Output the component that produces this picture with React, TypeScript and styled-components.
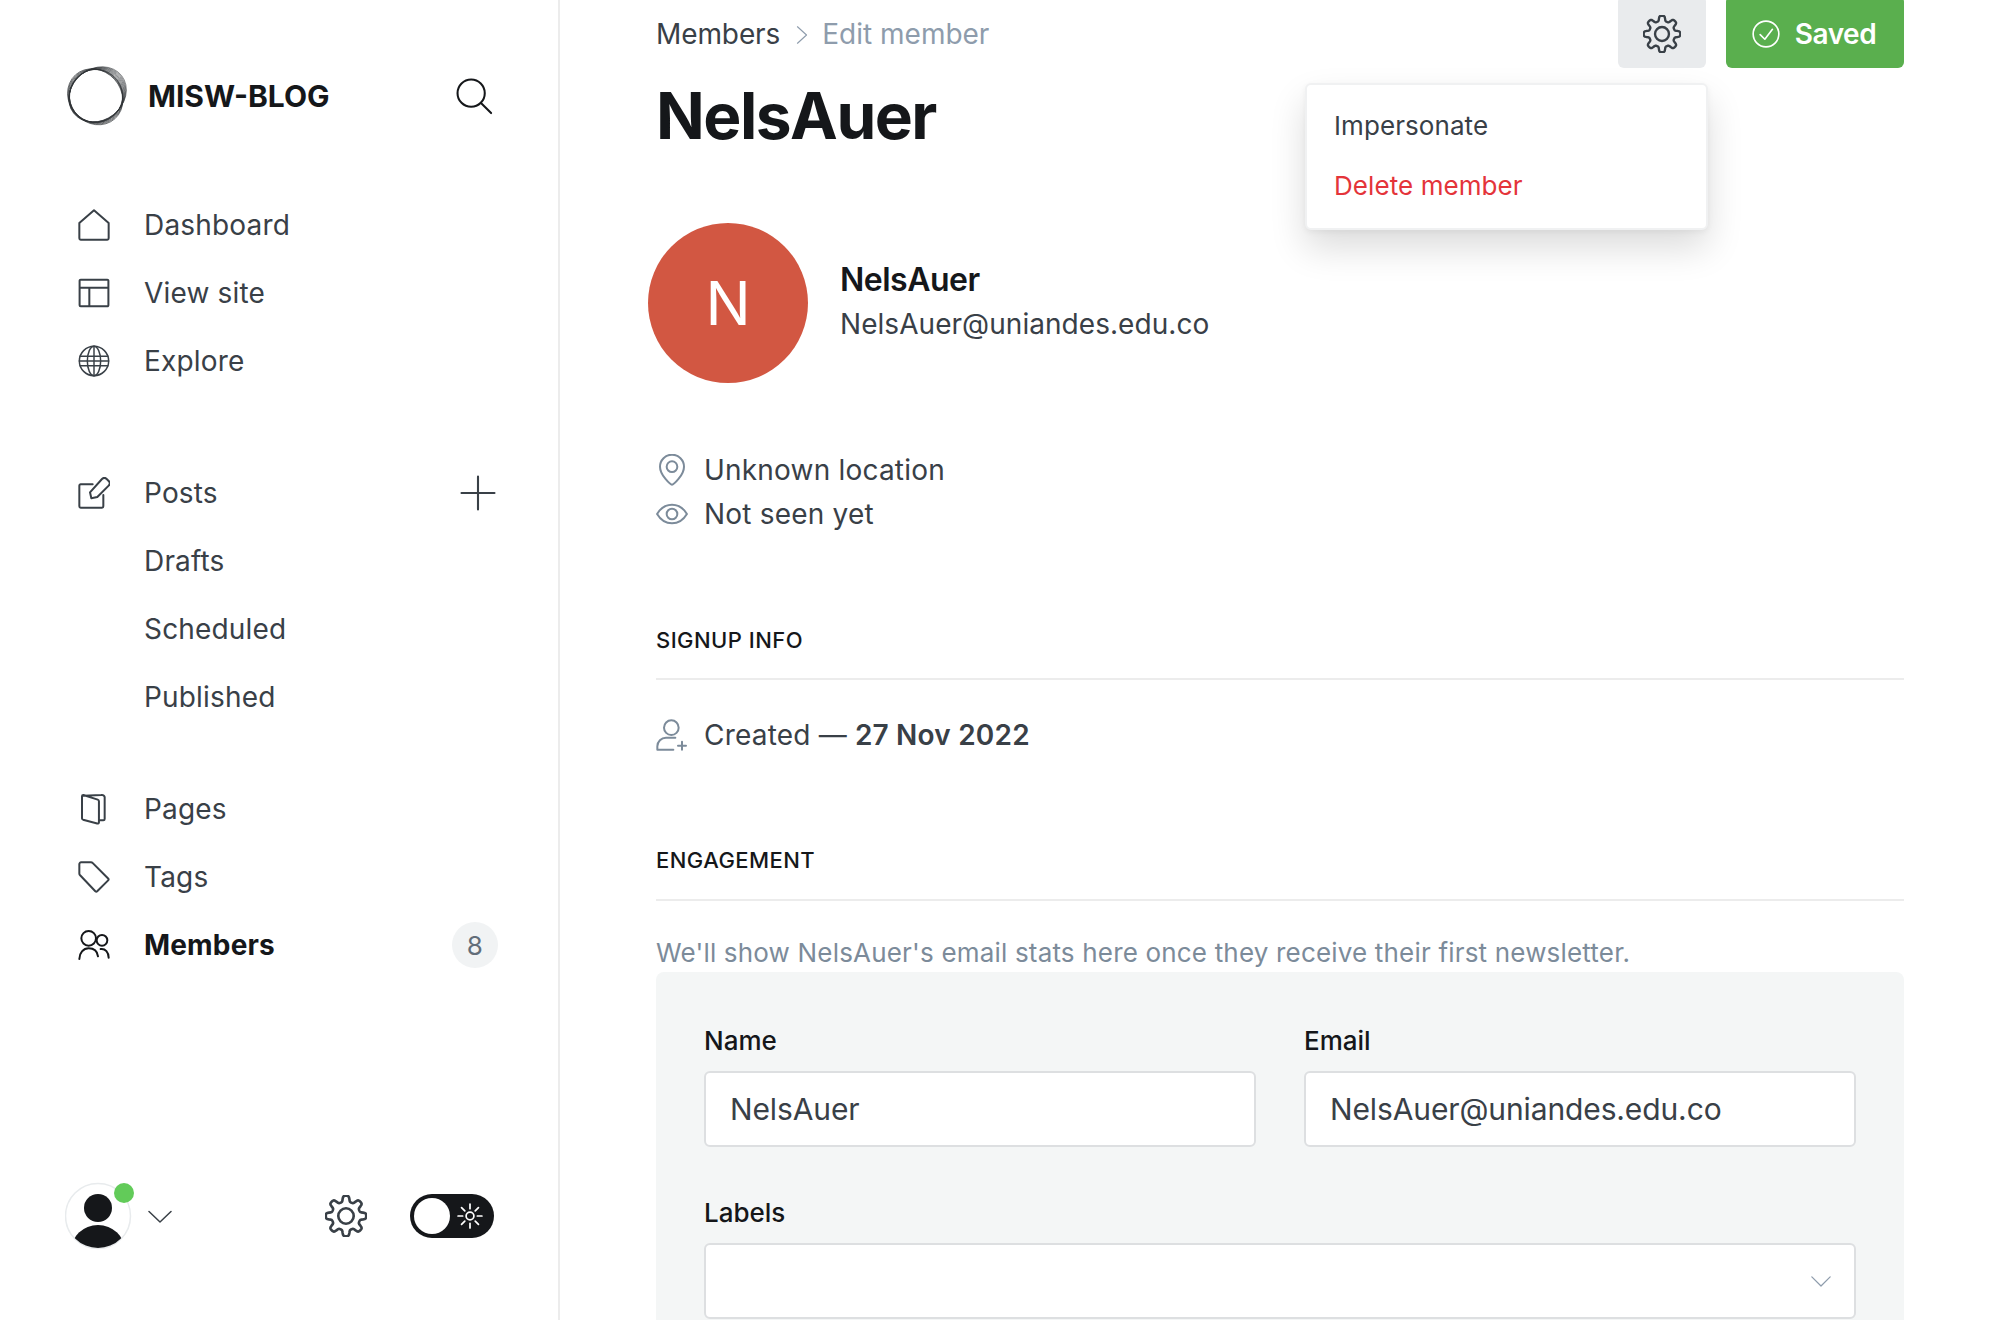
import * as React from 'react';
import styled, { createGlobalStyle } from 'styled-components';

const GlobalStyle = createGlobalStyle`
  html, body {
    margin: 0;
    padding: 0;
    background: #fff;
    font-family: Inter, "Noto Sans", sans-serif;
    color: #394047;
  }
  * { box-sizing: border-box; }
`;

const Page = styled.div`
  display: flex;
  width: 2000px;
  height: 1320px;
  overflow: hidden;
`;

const Sidebar = styled.aside`
  flex: 0 0 560px;
  height: 100%;
  border-right: 2px solid #ececec;
  padding: 65px 64px 0 65px;
  display: flex;
  flex-direction: column;
`;

const Brand = styled.div`
  display: flex;
  align-items: center;
  height: 62px;
`;

const BrandName = styled.div`
  margin-left: 21px;
  font-size: 30px;
  font-weight: 700;
  color: #15171a;
  flex: 1;
  letter-spacing: 0;
`;

const SearchSlot = styled.span`
  margin-right: 1px;
`;

const NavGroup = styled.nav<{ $top: number }>`
  display: flex;
  flex-direction: column;
  margin-top: ${(p) => p.$top}px;
`;

const NavRow = styled.div<{ $active?: boolean }>`
  display: flex;
  align-items: center;
  height: 68px;
  padding-left: 13px;
  font-size: 28px;
  letter-spacing: 0.17px;
  font-weight: ${(p) => (p.$active ? 700 : 400)};
  color: ${(p) => (p.$active ? '#15171a' : '#394047')};
`;

const NavIcon = styled.span`
  display: flex;
  width: 32px;
  height: 32px;
  margin-right: 34px;
`;

const NavLabel = styled.span`
  flex: 1;
`;

const NavSubLabel = styled.span`
  margin-left: 66px;
`;

const PlusSlot = styled.span`
  display: flex;
  margin-right: -2px;
`;

const Count = styled.span`
  width: 46px;
  height: 46px;
  margin-right: -4px;
  border-radius: 50%;
  background: #f1f3f4;
  color: #626d79;
  font-size: 26px;
  font-weight: 400;
  display: flex;
  align-items: center;
  justify-content: center;
`;

const Footer = styled.div`
  margin-top: auto;
  margin-bottom: 70px;
  display: flex;
  align-items: center;
  height: 68px;
`;

const UserWrap = styled.div`
  position: relative;
  width: 68px;
  height: 68px;
`;

const OnlineDot = styled.span`
  position: absolute;
  top: 1px;
  right: -1px;
  width: 20px;
  height: 20px;
  border-radius: 50%;
  background: #62cb59;
`;

const FooterChevron = styled.span`
  display: flex;
  margin-left: 15px;
  flex: 1;
`;

const Toggle = styled.div`
  width: 84px;
  height: 44px;
  margin-left: 43px;
  border-radius: 22px;
  background: #15171a;
  display: flex;
  align-items: center;
  padding: 0 11px 0 4px;
  justify-content: space-between;
`;

const Knob = styled.span`
  width: 36px;
  height: 36px;
  border-radius: 50%;
  background: #fff;
`;

const Main = styled.main`
  flex: 1;
  padding: 0 96px;
  min-width: 0;
  position: relative;
`;

const TopBar = styled.div`
  display: flex;
  align-items: center;
  height: 68px;
`;

const Crumbs = styled.div`
  flex: 1;
  display: flex;
  align-items: center;
  font-size: 28px;
  letter-spacing: -0.1px;
`;

const CrumbSep = styled.span`
  display: flex;
  margin: 2px 11px 0 13px;
`;

const CrumbCurrent = styled.span`
  color: #8e9cac;
  letter-spacing: 0;
`;

const GearButton = styled.button`
  width: 88px;
  height: 72px;
  margin: -4px 20px 0 0;
  border: 0;
  border-radius: 6px;
  background: #e9ebed;
  display: flex;
  align-items: center;
  justify-content: center;
  padding: 4px 0 0;
`;

const SavedButton = styled.button`
  width: 178px;
  height: 72px;
  margin-top: -4px;
  border: 0;
  border-radius: 6px;
  background: #5aaf4e;
  color: #fff;
  font-family: inherit;
  font-size: 28px;
  font-weight: 600;
  letter-spacing: -0.45px;
  display: flex;
  align-items: center;
  justify-content: center;
  gap: 15px;
  padding: 4px 2px 0 0;
`;

const Menu = styled.div`
  position: absolute;
  top: 83px;
  left: 745px;
  width: 403px;
  height: 147px;
  background: #fff;
  border: 2px solid #f0f1f2;
  border-radius: 6px;
  box-shadow: 0 18px 36px rgba(0, 0, 0, 0.14), 0 2px 6px rgba(0, 0, 0, 0.05);
  padding: 10px 0 0 27px;
`;

const MenuItem = styled.div<{ $danger?: boolean }>`
  height: 60px;
  display: flex;
  align-items: center;
  font-size: 26px;
  letter-spacing: 0.08px;
  color: ${(p) => (p.$danger ? '#e4343a' : '#394047')};
`;

const Title = styled.h1`
  margin: 10px 0 0;
  font-size: 64px;
  line-height: 76px;
  font-weight: 700;
  letter-spacing: -1.5px;
  color: #15171a;
`;

const Identity = styled.div`
  display: flex;
  align-items: center;
  margin: 69px 0 0 -8px;
`;

const Avatar = styled.div`
  width: 160px;
  height: 160px;
  border-radius: 50%;
  background: #d25742;
  color: #fff;
  font-size: 60px;
  display: flex;
  align-items: center;
  justify-content: center;
`;

const IdentityText = styled.div`
  margin-left: 32px;
`;

const MemberName = styled.div`
  font-size: 32px;
  line-height: 42px;
  font-weight: 600;
  color: #15171a;
  letter-spacing: -0.5px;
`;

const MemberEmail = styled.div`
  font-size: 28px;
  line-height: 46px;
  letter-spacing: 0.05px;
`;

const MetaList = styled.div<{ $top: number }>`
  margin-top: ${(p) => p.$top}px;
  display: flex;
  flex-direction: column;
`;

const MetaRow = styled.div`
  display: flex;
  align-items: center;
  height: 44px;
  font-size: 28px;
  letter-spacing: 0.2px;
  strong {
    font-weight: 600;
    margin-left: 8px;
  }
`;

const MetaIcon = styled.span`
  display: flex;
  width: 32px;
  height: 32px;
  margin-right: 16px;
`;

const SectionHead = styled.h4<{ $top: number; $h: number }>`
  margin: ${(p) => p.$top}px 0 0;
  height: ${(p) => p.$h}px;
  padding-top: 14px;
  font-size: 22px;
  line-height: 28px;
  font-weight: 500;
  letter-spacing: 0.45px;
  color: #15171a;
  border-bottom: 2px solid #ececec;
`;

const Note = styled.p`
  margin: 36px 0 0;
  font-size: 26px;
  line-height: 32px;
  color: #7c8b9a;
  letter-spacing: 0.18px;
`;

const Panel = styled.div`
  margin-top: 3px;
  background: #f4f6f6;
  border-radius: 8px 8px 0 0;
  padding: 49px 48px 0;
  height: 400px;
`;

const FieldGrid = styled.div`
  display: grid;
  grid-template-columns: 552px 552px;
  column-gap: 48px;
`;

const Field = styled.div<{ $wide?: boolean }>`
  grid-column: ${(p) => (p.$wide ? '1 / 3' : 'auto')};
  margin-top: ${(p) => (p.$wide ? '46px' : '0')};
`;

const Label = styled.label`
  display: block;
  font-size: 26px;
  line-height: 40px;
  font-weight: 500;
  color: #15171a;
  margin-bottom: 10px;
`;

const InputBox = styled.div`
  height: 76px;
  background: #fff;
  border: 2px solid #dddfe1;
  border-radius: 6px;
  padding: 0 24px;
  display: flex;
  align-items: center;
  justify-content: space-between;
  font-size: 30px;
  letter-spacing: -0.12px;
`;

const SelectChevron = styled.span`
  display: flex;
  margin-right: -1px;
`;

const Stroke = styled.svg<{ $c?: string }>`
  fill: none;
  stroke: ${(p) => p.$c || '#394047'};
  stroke-width: 1.5;
  stroke-linecap: round;
  stroke-linejoin: round;
  display: block;
`;

type IconProps = { size?: number; c?: string; sw?: number };

const Ic = ({ size = 32, c, sw = 1.5, children }: IconProps & { children: React.ReactNode }) => (
  <Stroke $c={c} width={size} height={size} viewBox="0 0 24 24" style={{ strokeWidth: sw }}>
    {children}
  </Stroke>
);

function gearPath() {
  const pts: string[] = [];
  for (let i = 0; i < 160; i++) {
    const t = (i / 160) * Math.PI * 2;
    const r = 9.9 + 1.7 * Math.tanh(2.2 * Math.cos(8 * t));
    pts.push(`${(12 + r * Math.sin(t)).toFixed(2)} ${(12 - r * Math.cos(t)).toFixed(2)}`);
  }
  return 'M' + pts.join('L') + 'Z';
}
const GEAR = gearPath();

const Gear = (p: IconProps) => (
  <Ic {...p}>
    <path d={GEAR} />
    <circle cx="12" cy="12" r="4.4" />
  </Ic>
);

// fan of rings: bulges toward upper right, a second set toward lower left
const logoRings = [
  ...[0, 1, 2, 3, 4, 5, 6, 7].map((i) => {
    const t = i / 7;
    return { rx: 26.5 + 4 * t, ry: 26.5 - 0.8 * t, a: -38, cx: 31 + 1.6 * t, cy: 31 - 1.6 * t, o: 0.55 };
  }),
  ...[0, 1, 2, 3].map((i) => {
    const t = i / 3;
    return { rx: 27 + 2.5 * t, ry: 26.5 - 0.5 * t, a: 42 + 6 * t, cx: 31 - 0.8 * t, cy: 31 + 0.8 * t, o: 0.7 };
  }),
];

const Logo = () => (
  <svg width="62" height="62" viewBox="0 0 62 62" fill="none" stroke="#2f3336" strokeWidth="0.9">
    {logoRings.map((r, i) => (
      <ellipse key={i} cx={r.cx} cy={r.cy} rx={r.rx} ry={r.ry} opacity={r.o} transform={`rotate(${r.a} ${r.cx} ${r.cy})`} />
    ))}
  </svg>
);

const Search = () => (
  <Ic size={38} c="#15171a" sw={1.3}>
    <circle cx="10.2" cy="10.2" r="8.6" />
    <path d="M16.4 16.4 22.8 22.8" />
  </Ic>
);

const Plus = () => (
  <Ic size={36} sw={1.4}>
    <path d="M12 1v22M1 12h22" />
  </Ic>
);

const UserAvatar = () => (
  <svg width="68" height="68" viewBox="0 0 68 68">
    <defs>
      <clipPath id="user-clip">
        <circle cx="33" cy="34" r="32" />
      </clipPath>
    </defs>
    <circle cx="33" cy="34" r="32.5" fill="#fff" stroke="#e8ebed" strokeWidth="1.5" />
    <g clipPath="url(#user-clip)" fill="#15171a">
      <circle cx="33" cy="26" r="14" />
      <ellipse cx="33" cy="69" rx="27" ry="26" />
    </g>
  </svg>
);

const Sun = () => (
  <Ic size={26} c="#fff" sw={1.6}>
    <circle cx="12" cy="12" r="3.6" />
    <path d="M12 1v4.2M12 18.8V23M1 12h4.2M18.8 12H23M4.2 4.2l3 3M16.8 16.8l3 3M4.2 19.8l3-3M16.8 7.2l3-3" />
  </Ic>
);

const navTop = [
  {
    label: 'Dashboard',
    icon: <path d="M1 22V10.5L12 1l11 9.5V22a1 1 0 0 1-1 1H2a1 1 0 0 1-1-1Z" />,
  },
  {
    label: 'View site',
    icon: <path d="M2 2h20a.8.8 0 0 1 .8.8v18.4a.8.8 0 0 1-.8.8H2a.8.8 0 0 1-.8-.8V2.800a.8.8 0 0 1 .8-.8ZM1.200 8h21.600M8.500 8v14" />,
  },
  {
    label: 'Explore',
    icon: (
      <g strokeWidth="1.1">
        <circle cx="12" cy="12" r="11" />
        <ellipse cx="12" cy="12" rx="5" ry="11" />
        <path d="M12 1v22M1.500 8.500h21M1.500 15.500h21M1 12h22" />
      </g>
    ),
  },
];

const navBottom = [
  {
    label: 'Pages',
    icon: <path d="M4 2 17.500 1.500a2 2 0 0 1 2.500 1.500v16.500a1 1 0 0 1-1 1h-3M3 2.500a1 1 0 0 1 1-1L14.800 5a1.300 1.300 0 0 1 .9 1.200V22a1 1 0 0 1-1.300.9L3.800 20A1.200 1.200 0 0 1 3 19Z" />,
  },
  {
    label: 'Tags',
    icon: <path d="M1 2.300A1.300 1.300 0 0 1 2.300 1h7.400a2 2 0 0 1 1.400.6l11.500 11.500a1 1 0 0 1 0 1.400l-8.200 8.200a1 1 0 0 1-1.400 0L1.600 10.700a2 2 0 0 1-.6-1.400Z" />,
  },
];

export default function App() {
  return (
    <>
      <GlobalStyle />
      <Page>
        <Sidebar>
          <Brand>
            <Logo />
            <BrandName>MISW-BLOG</BrandName>
            <SearchSlot>
              <Search />
            </SearchSlot>
          </Brand>
          <NavGroup $top={64}>
            {navTop.map((n) => (
              <NavRow key={n.label}>
                <NavIcon>
                  <Ic>{n.icon}</Ic>
                </NavIcon>
                <NavLabel>{n.label}</NavLabel>
              </NavRow>
            ))}
          </NavGroup>
          <NavGroup $top={64}>
            <NavRow>
              <NavIcon>
                <Ic>
                  <path d="M19 13.500V22a1 1 0 0 1-1 1H2a1 1 0 0 1-1-1V6.500a1 1 0 0 1 1-1h9" />
                  <path d="M9 11.500 10 16l4.500-1L23 6.500a2.500 2.500 0 0 0 0-3.500l-1.500-1.500a2.500 2.500 0 0 0-3.500 0Z" />
                </Ic>
              </NavIcon>
              <NavLabel>Posts</NavLabel>
              <PlusSlot>
                <Plus />
              </PlusSlot>
            </NavRow>
            <NavRow>
              <NavSubLabel>Drafts</NavSubLabel>
            </NavRow>
            <NavRow>
              <NavSubLabel>Scheduled</NavSubLabel>
            </NavRow>
            <NavRow>
              <NavSubLabel>Published</NavSubLabel>
            </NavRow>
          </NavGroup>
          <NavGroup $top={44}>
            {navBottom.map((n) => (
              <NavRow key={n.label}>
                <NavIcon>
                  <Ic>{n.icon}</Ic>
                </NavIcon>
                <NavLabel>{n.label}</NavLabel>
              </NavRow>
            ))}
            <NavRow $active>
              <NavIcon>
                <Ic c="#15171a">
                  <circle cx="8" cy="7" r="5.500" />
                  <path d="M1 22.500c0-4.500 3-8 7-8s6.500 2.500 7 6" />
                  <circle cx="18" cy="8.500" r="4" />
                  <path d="M17 15c3.500-.5 6 2.500 6 6.500" />
                </Ic>
              </NavIcon>
              <NavLabel>Members</NavLabel>
              <Count>8</Count>
            </NavRow>
          </NavGroup>
          <Footer>
            <UserWrap>
              <UserAvatar />
              <OnlineDot />
            </UserWrap>
            <FooterChevron>
              <Ic size={24}>
                <path d="M1 7.500 12 18 23 7.500" />
              </Ic>
            </FooterChevron>
            <Gear size={42} />
            <Toggle>
              <Knob />
              <Sun />
            </Toggle>
          </Footer>
        </Sidebar>
        <Main>
          <TopBar>
            <Crumbs>
              Members
              <CrumbSep>
                <Ic size={18} c="#8e9cac">
                  <path d="M6 1 18 12 6 23" />
                </Ic>
              </CrumbSep>
              <CrumbCurrent>Edit member</CrumbCurrent>
            </Crumbs>
            <GearButton>
              <Gear size={38} sw={1.5} />
            </GearButton>
            <SavedButton>
              <Ic size={28} c="#fff" sw={1.4}>
                <circle cx="12" cy="12" r="11" />
                <path d="M7 12.500 11 16.500 17.500 8" />
              </Ic>
              Saved
            </SavedButton>
          </TopBar>
          <Menu>
            <MenuItem>Impersonate</MenuItem>
            <MenuItem $danger>Delete member</MenuItem>
          </Menu>
          <Title>NelsAuer</Title>
          <Identity>
            <Avatar>N</Avatar>
            <IdentityText>
              <MemberName>NelsAuer</MemberName>
              <MemberEmail>NelsAuer@uniandes.edu.co</MemberEmail>
            </IdentityText>
          </Identity>
          <MetaList $top={65}>
            <MetaRow>
              <MetaIcon>
                <Ic c="#7c8b9a">
                  <path d="M12 23c-1 0-9-7-9-13.500a9 9 0 0 1 18 0C21 16 13 23 12 23Z" />
                  <circle cx="12" cy="9.500" r="4" />
                </Ic>
              </MetaIcon>
              Unknown location
            </MetaRow>
            <MetaRow>
              <MetaIcon>
                <Ic c="#7c8b9a">
                  <path d="M.8 12C3.500 7.500 7.500 5 12 5s8.500 2.500 11.200 7c-2.700 4.500-6.700 7-11.200 7S3.500 16.500.8 12Z" />
                  <circle cx="12" cy="12" r="4" />
                </Ic>
              </MetaIcon>
              Not seen yet
            </MetaRow>
          </MetaList>
          <SectionHead $top={76} $h={68}>SIGNUP INFO</SectionHead>
          <MetaList $top={33}>
            <MetaRow>
              <MetaIcon>
                <Ic c="#7c8b9a">
                  <circle cx="11.500" cy="6.500" r="5.500" />
                  <path d="M1 23v-2.500c0-3.500 3-6.500 6.500-6.500h7M1 23h12M19.500 17v6M16.500 20h6" />
                </Ic>
              </MetaIcon>
              Created — <strong>27 Nov 2022</strong>
            </MetaRow>
          </MetaList>
          <SectionHead $top={75} $h={69}>ENGAGEMENT</SectionHead>
          <Note>We'll show NelsAuer's email stats here once they receive their first newsletter.</Note>
          <Panel>
            <FieldGrid>
              <Field>
                <Label>Name</Label>
                <InputBox>NelsAuer</InputBox>
              </Field>
              <Field>
                <Label>Email</Label>
                <InputBox>NelsAuer@uniandes.edu.co</InputBox>
              </Field>
              <Field $wide>
                <Label>Labels</Label>
                <InputBox>
                  <span />
                  <SelectChevron>
                    <Ic size={20} c="#8e9cac">
                      <path d="M1 7 12 18 23 7" />
                    </Ic>
                  </SelectChevron>
                </InputBox>
              </Field>
            </FieldGrid>
          </Panel>
        </Main>
      </Page>
    </>
  );
}
